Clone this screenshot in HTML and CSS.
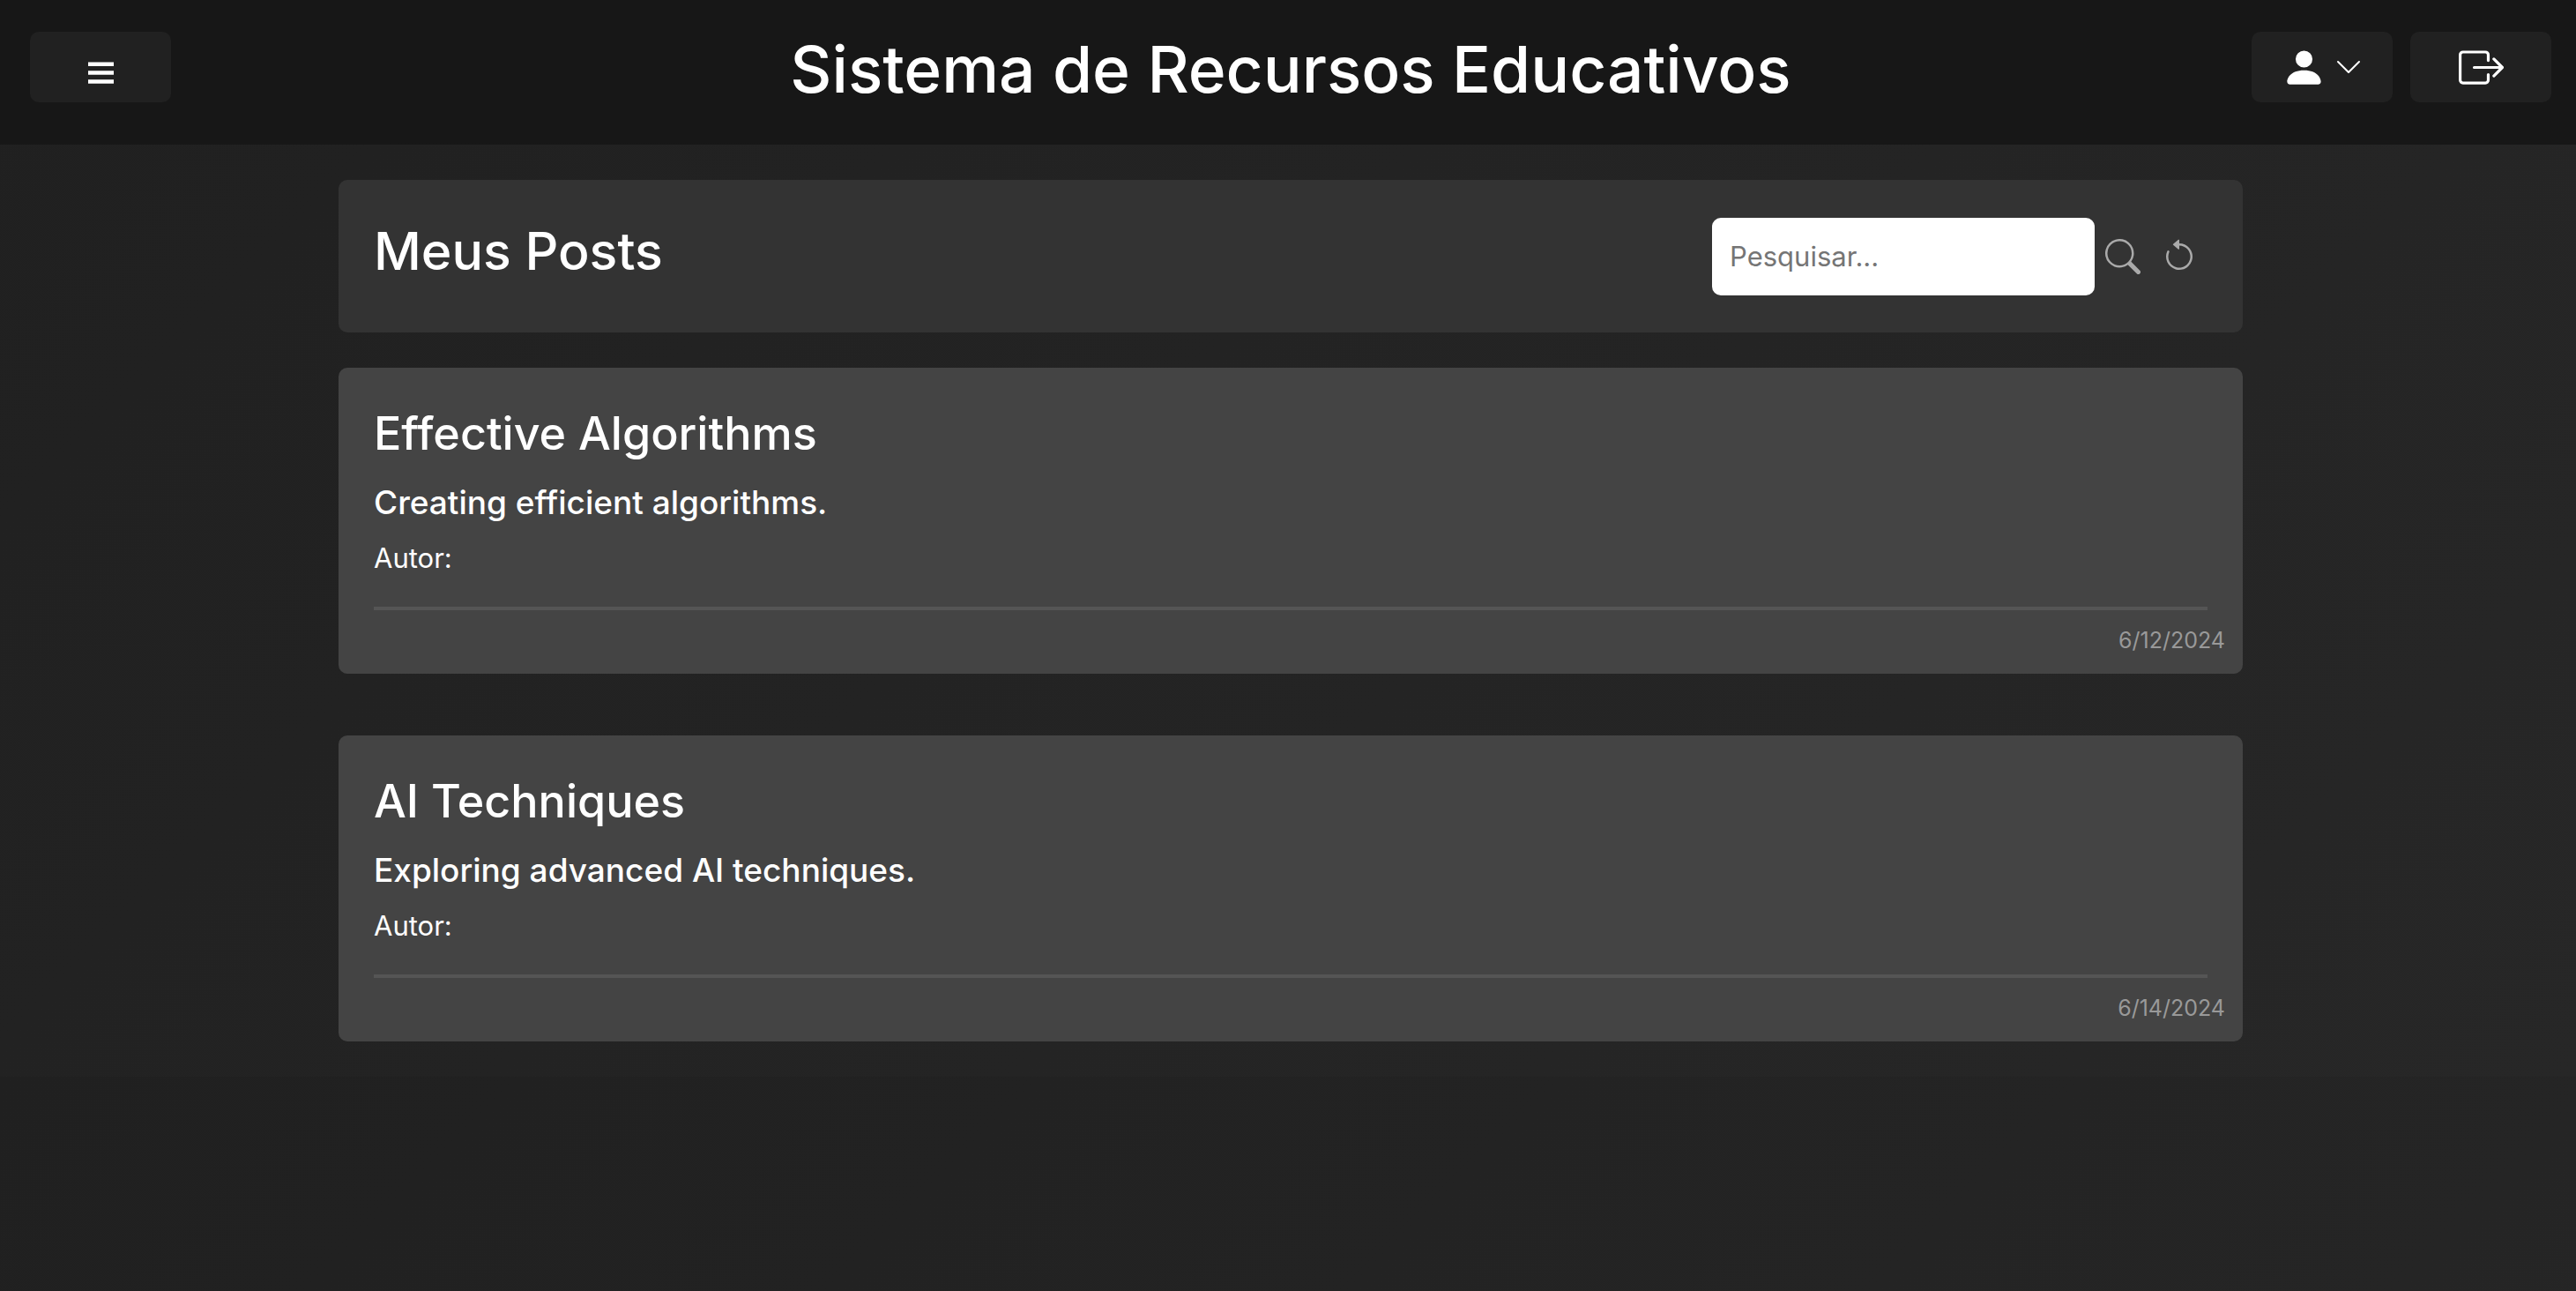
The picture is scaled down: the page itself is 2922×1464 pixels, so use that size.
FILE: index.html
```html
<!DOCTYPE html>
<html lang="pt-BR">
<head>
<meta charset="utf-8">
<title>Sistema de Recursos Educativos</title>
<link rel="stylesheet" href="styles.css">
</head>
<body>
<header class="topbar">
  <button class="topbar-button" type="button" aria-label="Menu">
    <svg class="icon-menu" viewBox="0 0 29 25" fill="currentColor" aria-hidden="true"><path d="M0 0.500h29v4.500H0zM0 10.300h29v4.500H0zM0 20.200h29v4.500H0z"/></svg>
  </button>
  <h1 class="topbar-title">Sistema de Recursos Educativos</h1>
  <div class="topbar-actions">
    <button class="topbar-button" type="button" aria-label="Perfil">
      <svg class="icon-large" viewBox="0 0 16 16" fill="currentColor" aria-hidden="true"><path d="M3 14s-1 0-1-1 1-4 6-4 6 3 6 4-1 1-1 1zm5-6a3 3 0 1 0 0-6 3 3 0 0 0 0 6"/></svg>
      <svg class="icon-small" viewBox="0 0 16 16" fill="currentColor" aria-hidden="true"><path fill-rule="evenodd" d="M1.646 4.646a.5.5 0 0 1 .708 0L8 10.293l5.646-5.647a.5.5 0 0 1 .708.708l-6 6a.5.5 0 0 1-.708 0l-6-6a.5.5 0 0 1 0-.708"/></svg>
    </button>
    <button class="topbar-button" type="button" aria-label="Sair">
      <svg class="icon-large" viewBox="0 0 16 16" fill="currentColor" aria-hidden="true"><path fill-rule="evenodd" d="M10 12.500a.5.5 0 0 1-.5.5h-8a.5.5 0 0 1-.5-.5v-9a.5.5 0 0 1 .5-.5h8a.5.5 0 0 1 .5.5v2a.5.5 0 0 0 1 0v-2A1.500 1.500 0 0 0 9.500 2h-8A1.500 1.500 0 0 0 0 3.500v9A1.500 1.500 0 0 0 1.500 14h8a1.500 1.500 0 0 0 1.500-1.500v-2a.5.5 0 0 0-1 0z"/><path fill-rule="evenodd" d="M15.854 8.354a.5.5 0 0 0 0-.708l-3-3a.5.5 0 0 0-.708.708L14.293 7.500H5.500a.5.5 0 0 0 0 1h8.793l-2.147 2.146a.5.5 0 0 0 .708.708z"/></svg>
    </button>
  </div>
</header>
<main class="content">
  <section class="panel">
    <h2 class="panel-title">Meus Posts</h2>
    <form class="search">
      <input class="search-input" type="text" placeholder="Pesquisar..." aria-label="Pesquisar">
      <button class="search-button" type="submit" aria-label="Buscar">
        <svg class="icon-medium" viewBox="0 0 16 16" fill="currentColor" aria-hidden="true"><path d="M11.742 10.344a6.500 6.500 0 1 0-1.397 1.398h-.001q.044.060.098.115l3.850 3.850a1 1 0 0 0 1.415-1.414l-3.850-3.850a1 1 0 0 0-.115-.1zM12 6.500a5.500 5.500 0 1 1-11 0 5.500 5.500 0 0 1 11 0"/></svg>
      </button>
      <button class="search-button" type="reset" aria-label="Limpar">
        <svg class="icon-medium" viewBox="0 0 16 16" fill="currentColor" aria-hidden="true"><path fill-rule="evenodd" d="M8 3a5 5 0 1 1-4.546 2.914.5.5 0 0 0-.908-.417A6 6 0 1 0 8 2z"/><path d="M8 4.466V.534a.25.25 0 0 0-.41-.192L5.230 2.308a.25.25 0 0 0 0 .384l2.360 1.966A.25.25 0 0 0 8 4.466"/></svg>
      </button>
    </form>
  </section>
  <div class="posts">
    <article class="post">
      <h3 class="post-title">Effective Algorithms</h3>
      <h4 class="post-summary">Creating efficient algorithms.</h4>
      <p class="post-author">Autor:</p>
      <hr class="post-rule">
      <time class="post-date" datetime="2024-06-12">6/12/2024</time>
    </article>
    <article class="post">
      <h3 class="post-title">AI Techniques</h3>
      <h4 class="post-summary">Exploring advanced AI techniques.</h4>
      <p class="post-author">Autor:</p>
      <hr class="post-rule">
      <time class="post-date" datetime="2024-06-14">6/14/2024</time>
    </article>
  </div>
</main>
</body>
</html>
```
FILE: styles.css
```css
* {
  box-sizing: border-box;
}

body {
  margin: 0;
  background: linear-gradient(135deg, #202020, #272727);
  color: #fff;
  font-family: Inter, "Liberation Sans", sans-serif;
  font-size: 31px;
  line-height: 40px;
}

h1, h2, h3, h4, p {
  margin: 0;
}

button {
  padding: 0;
  border: 0;
  color: inherit;
  font: inherit;
  cursor: pointer;
}

svg {
  display: block;
}

.topbar {
  display: grid;
  grid-template-columns: 1fr auto 1fr;
  align-items: start;
  padding: 36px 28px 48px 34px;
  background: #171717;
}

.topbar-title {
  height: 80px;
  font-size: 73px;
  font-weight: 500;
  line-height: 86px;
}

.topbar-actions {
  display: flex;
  justify-content: flex-end;
  gap: 20px;
}

.topbar-button {
  display: flex;
  align-items: center;
  justify-content: center;
  gap: 9px;
  width: 160px;
  height: 80px;
  border-radius: 10px;
  background: #212121;
}

.icon-menu {
  width: 29px;
  height: 25px;
  margin-top: 12px;
}

.icon-large {
  width: 51px;
  height: 51px;
}

.icon-medium {
  width: 40px;
  height: 40px;
}

.icon-small {
  width: 32px;
  height: 32px;
}

.content {
  max-width: 2166px;
  margin: 0 auto;
  padding: 40px 0 40px 6px;
}

.panel {
  display: flex;
  align-items: center;
  justify-content: space-between;
  padding: 40px;
  border-radius: 10px;
  background: #333;
}

.panel-title {
  padding-bottom: 12px;
  font-size: 59px;
  font-weight: 500;
  line-height: 81px;
}

.search {
  display: flex;
  align-items: center;
}

.search-input {
  width: 434px;
  height: 88px;
  padding: 0 20px;
  border: 0;
  border-radius: 10px;
  background: #fff;
  color: #212121;
  font: inherit;
}

.search-input::placeholder {
  color: #757575;
  opacity: 1;
}

.search-button {
  padding: 12px;
  background: none;
  color: #aaa;
}

.posts {
  display: grid;
  gap: 70px;
  margin-top: 40px;
}

.post {
  padding: 40px 20px 16px 40px;
  border-radius: 10px;
  background: #444;
}

.post-title {
  font-size: 52px;
  font-weight: 500;
  line-height: 70px;
}

.post-summary {
  margin-top: 16px;
  font-size: 37px;
  font-weight: 500;
  line-height: 54px;
}

.post-author {
  margin-top: 16px;
}

.post-rule {
  height: 4px;
  margin: 35px 20px 12px 0;
  border: 0;
  background: #555;
}

.post-date {
  display: block;
  color: #999;
  font-size: 25px;
  line-height: 44px;
  text-align: right;
}
```
